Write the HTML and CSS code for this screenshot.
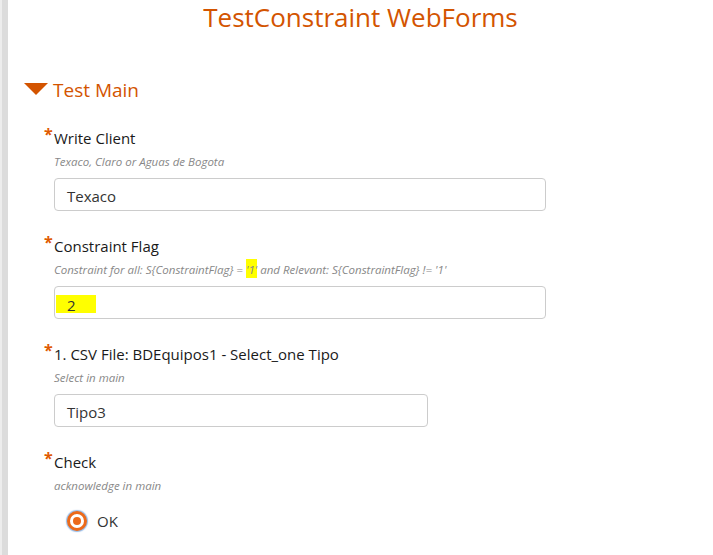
FILE: index.html
```html
<!DOCTYPE html>
<html lang="en">
<head>
<meta charset="utf-8">
<title>TestConstraint WebForms</title>
<link rel="stylesheet" href="styles.css">
</head>
<body>
<div class="page">
  <div class="rail"></div>
  <main class="form">
    <h1 class="form-title">TestConstraint WebForms</h1>
    <section class="group">
      <h2 class="group-head"><span class="caret"></span><span>Test Main</span></h2>

      <div class="question">
        <div class="q-label"><span class="req">*</span>Write Client</div>
        <div class="q-hint">Texaco, Claro or Aguas de Bogota</div>
        <div class="field field-wide">Texaco</div>
      </div>

      <div class="question">
        <div class="q-label"><span class="req">*</span>Constraint Flag</div>
        <div class="q-hint">Constraint for all: S{ConstraintFlag} = <span class="hl-inline">'1'</span> and Relevant: S{ConstraintFlag} != '1'</div>
        <div class="field field-wide"><span class="hl-box">2</span></div>
      </div>

      <div class="question">
        <div class="q-label"><span class="req">*</span>1. CSV File: BDEquipos1 - Select_one Tipo</div>
        <div class="q-hint">Select in main</div>
        <div class="field field-select">Tipo3</div>
      </div>

      <div class="question">
        <div class="q-label"><span class="req">*</span>Check</div>
        <div class="q-hint">acknowledge in main</div>
        <label class="option">
          <span class="radio"><span class="radio-dot"></span></span>
          <span class="option-text">OK</span>
        </label>
      </div>
    </section>
  </main>
</div>
</body>
</html>
```

FILE: styles.css
```css
html, body {
  margin: 0;
  padding: 0;
  background: #fff;
}

body {
  font-family: "Open Sans", "Liberation Sans", sans-serif;
  color: #2b2b2b;
}

.page {
  display: flex;
  min-height: 555px;
}

.rail {
  width: 6px;
  flex: 0 0 6px;
  border-left: 2px solid #ededed;
  background: #dcdcdc;
}

.form {
  flex: 1;
  min-width: 0;
}

.form-title {
  margin: 0;
  font-size: 26px;
  line-height: 34px;
  font-weight: 400;
  text-align: center;
  color: #d35400;
}

.group {
  margin-top: 44px;
}

.group-head {
  margin: 0 0 25px 0;
  padding-left: 16px;
  display: flex;
  align-items: center;
  gap: 5px;
  font-size: 19px;
  line-height: 25px;
  font-weight: 400;
  color: #d35400;
}

.caret {
  width: 0;
  height: 0;
  border-left: 12px solid transparent;
  border-right: 12px solid transparent;
  border-top: 12px solid #d35400;
  margin-top: -3px;
}

.question {
  padding-left: 46px;
  margin-bottom: 25px;
}

.q-label {
  font-size: 15px;
  line-height: 20px;
  color: #1a1a1a;
}

.req {
  display: inline-block;
  width: 10px;
  margin-left: -10px;
  color: #e05a00;
  font-size: 16px;
  font-weight: 700;
  vertical-align: 4px;
  line-height: 10px;
}

.q-hint {
  margin-top: 6px;
  font-size: 11.5px;
  line-height: 16px;
  font-style: italic;
  color: #888;
}

.hl-inline {
  display: inline-block;
  background: #ffff00;
  padding-top: 3px;
  margin-top: -3px;
}

.field {
  margin-top: 8px;
  box-sizing: border-box;
  height: 33px;
  border: 1px solid #cccccc;
  border-radius: 4px;
  padding: 2px 12px 0 12px;
  display: flex;
  align-items: center;
  font-size: 15px;
  line-height: 20px;
  color: #333;
  background: #fff;
}

.field-wide {
  width: 492px;
}

.field-select {
  width: 374px;
}

.hl-box {
  display: inline-block;
  background: #ffff00;
  margin-left: -11px;
  padding: 3px 20px 1px 11px;
  line-height: 14px;
}

.option {
  margin-top: 16px;
  margin-left: 13px;
  display: flex;
  align-items: center;
  gap: 10px;
  height: 22px;
}

.radio {
  box-sizing: border-box;
  width: 20px;
  height: 20px;
  border-radius: 50%;
  border: 3px solid #ec6a1a;
  background: #fff;
  display: flex;
  align-items: center;
  justify-content: center;
  box-shadow: 0 0 1px 1px rgba(90, 150, 220, 0.65);
}

.radio-dot {
  width: 8px;
  height: 8px;
  border-radius: 50%;
  background: #ec6a1a;
}

.option-text {
  font-size: 15px;
  line-height: 20px;
  color: #333;
}
```
